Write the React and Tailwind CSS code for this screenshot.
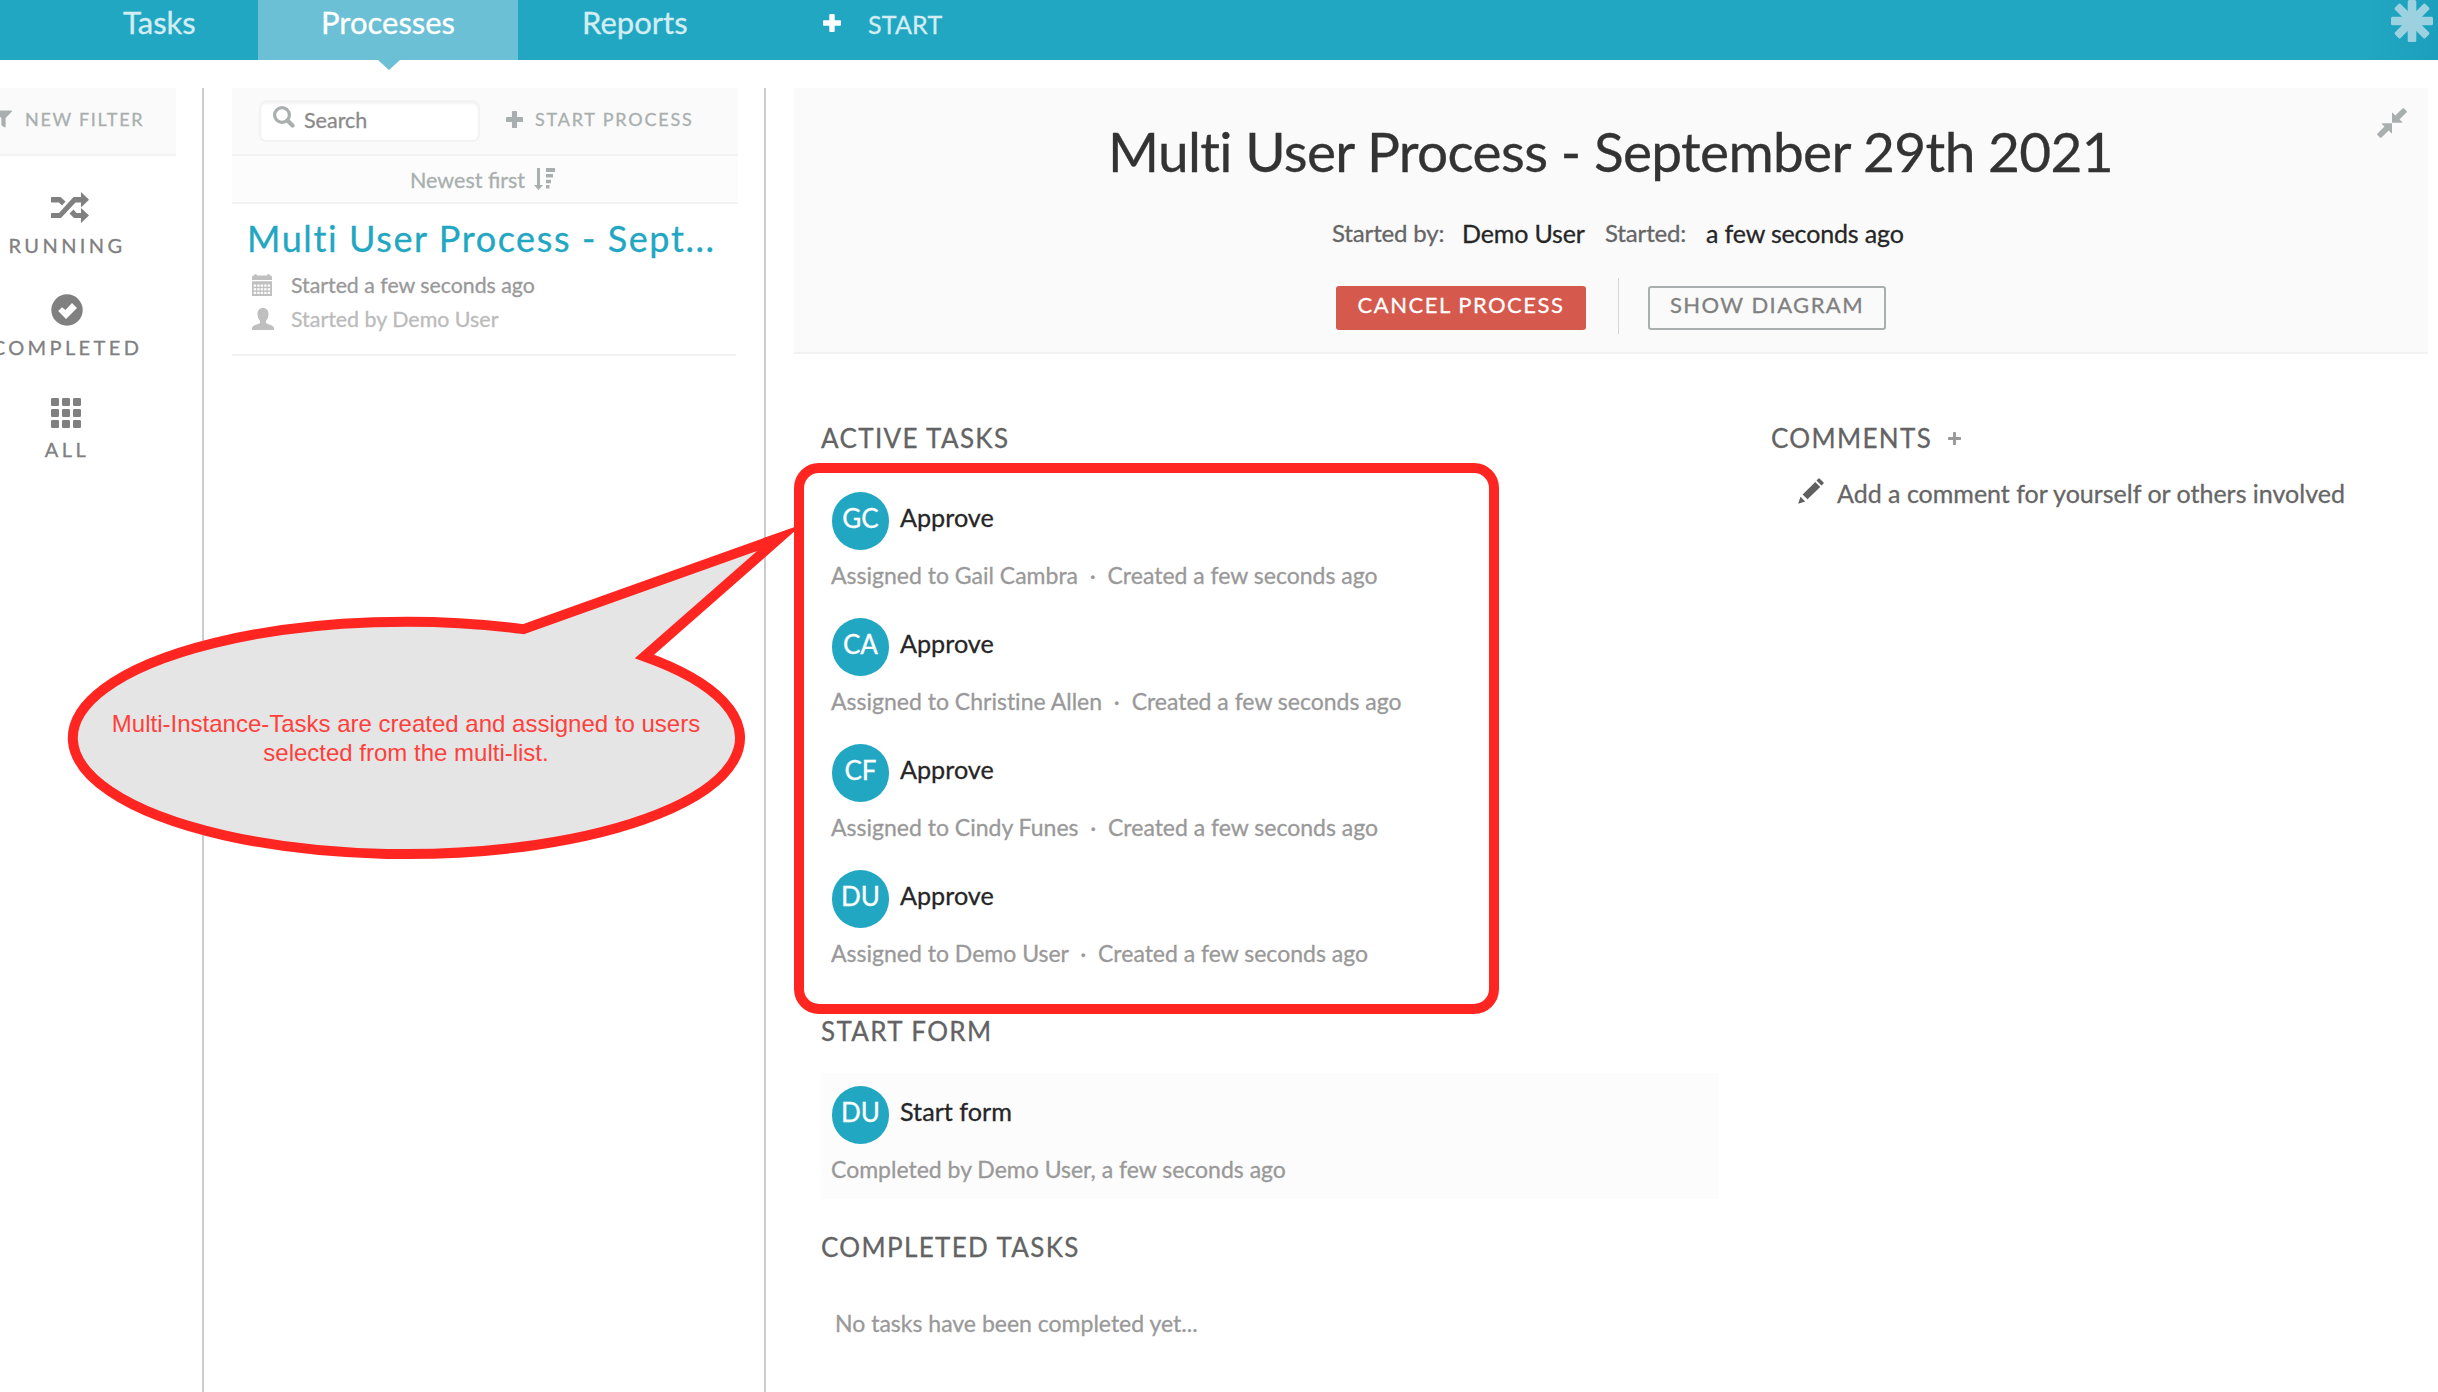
import React from "react";
import { FaFilter } from "react-icons/fa";

function Plus({ size, color, thickness = 6 }) {
  const a = 10 - thickness / 2;
  return (
    <svg viewBox="0 0 20 20" width={size} height={size} fill={color} className="block shrink-0">
      <rect x={a} y="0" width={thickness} height="20" rx="1" />
      <rect x="0" y={a} width="20" height={thickness} rx="1" />
    </svg>
  );
}
function Shuffle() {
  return (
    <svg viewBox="0 0 38 31" width="38" height="31" fill="#808080">
      <path d="M0 5.500Q0 5 .5 5H9.500L14.500 9.500 11 13.500 8 10.500H.5Q0 10.500 0 10zM0 21.500Q0 21 .5 21H8L22.500 5H30V0L38 7.700 30 15.500V10.500H24.500L10 26H.5Q0 26 0 25.500zM18.500 21.500L22.500 17.500 25.500 21H30V16L38 23.500 30 31V26H23z" />
    </svg>
  );
}
function CheckCircle() {
  return (
    <svg viewBox="0 0 32 32" width="32" height="32">
      <circle cx="16" cy="16" r="15.700" fill="#808080" />
      <path d="M7.200 17L11 13.200 14.500 16 21 9 26 14 15 25z" fill="#fff" />
    </svg>
  );
}
function Grid() {
  return (
    <svg viewBox="0 0 30 30" width="30" height="30" fill="#808080">
      {[0, 11, 22].map((x) => [0, 11, 22].map((y) => <rect key={x + "-" + y} x={x} y={y} width="8" height="8" rx="1.200" />))}
    </svg>
  );
}
function SortIcon() {
  return (
    <svg viewBox="0 0 21 22" width="21" height="22" fill="#a9afae">
      <path d="M3 0h3v17h3l-4.500 5L0 17h3zM12 0h9v4h-9zM12 6h7v3.500h-7zM12 11.700h5v3.500h-5zM12 17h3.500v3.500H12z" />
    </svg>
  );
}
function Calendar() {
  return (
    <svg viewBox="0 0 20 22" width="20" height="22">
      <path d="M0 3Q0 1.500 1.500 1.500H2Q2 0 3.500 0T5 1.500H15Q15 0 16.500 0T18 1.500H18.500Q20 1.500 20 3V6H0zM0 7.200H20V22H0z" fill="#c0c0c0" />
      {[1.7, 5.2, 8.7, 12.2, 15.7].map((x) =>
        [10.5, 14.2, 17.8].map((y) => <rect key={x + "-" + y} x={x} y={y} width="2.400" height="2.200" fill="#fff" />)
      )}
    </svg>
  );
}
function Person() {
  return (
    <svg viewBox="0 0 22 22" width="22" height="22" fill="#bfbfbf">
      <path d="M11 0c3.500 0 5.500 2.500 5.500 6 0 3-1.200 5.500-2.500 7v2c1.500 1.500 8 2 8 5v2H0v-2c0-3 6.500-3.500 8-5v-2c-1.300-1.500-2.500-4-2.500-7 0-3.500 2-6 5.500-6z" />
    </svg>
  );
}
function Magnifier() {
  return (
    <svg viewBox="0 0 22 22" width="22" height="22" fill="none" stroke="#a9afae">
      <circle cx="9" cy="9" r="7.400" strokeWidth="3.200" />
      <path d="M14.500 14.500l5 5" strokeWidth="4.200" strokeLinecap="round" />
    </svg>
  );
}
function Collapse() {
  return (
    <svg viewBox="0 0 30 30" width="30" height="30" fill="#a9afae">
      <path d="M15 5Q15 4.300 15.600 4.800L18.300 7.500 25.800.3Q26.300 0 26.800.3L29.700 3.200Q30 3.700 29.700 4.200L22.500 11.500 25.200 14Q25.600 14.700 25 14.700H15zM15 25Q15 25.700 14.400 25.200L11.700 22.500 4.200 29.700Q3.700 30 3.200 29.700L.3 26.800Q0 26.300.3 25.800L7.500 18.500 4.800 16Q4.400 15.300 5 15.300H15z" />
    </svg>
  );
}
function Star() {
  return (
    <svg viewBox="0 0 42 42" width="42" height="42" className="block" fill="#9cd2e0">
      <rect x="16.700" y="0" width="8.600" height="42" rx="1.500" />
      <rect x="0" y="16.700" width="42" height="8.600" rx="1.500" />
      <rect x="-.5" y="17" width="43" height="8" rx="1.500" transform="rotate(45 21 21)" />
      <rect x="-.5" y="17" width="43" height="8" rx="1.500" transform="rotate(-45 21 21)" />
    </svg>
  );
}
function Pencil() {
  return (
    <svg viewBox="0 0 26 26" width="26" height="26" fill="#606060">
      <path d="M20.500.4Q21 0 21.500.4L25.600 4.500Q26 5 25.600 5.500L23.500 7.500 18.500 2.500zM17.300 4L22.200 8.900 9.500 21.300 4.600 16.400zM2.500 18.800L7.200 23.500 1 25.600Q0 25.900.4 25z" />
    </svg>
  );
}

function Avatar({ children }) {
  return (
    <div className="flex h-[58px] w-[57px] items-center justify-center rounded-full bg-[#22a7c3] pb-[6px] text-[26px] leading-none text-white">
      {children}
    </div>
  );
}

function Task({ initials, title, children }) {
  return (
    <div className="pl-[11px]">
      <div className="flex gap-[11px]">
        <Avatar>{initials}</Avatar>
        <div className="pt-[9px] text-[25.2px] leading-[32px] text-[#262626]">{title}</div>
      </div>
      <div className="-ml-px mb-px mt-[9px] whitespace-pre text-[23px] leading-[32px] text-[#999]">{children}</div>
    </div>
  );
}

function Heading({ children }) {
  return <h2 className="text-[26px] leading-[30px] tracking-[1.35px] text-[#636363]">{children}</h2>;
}

function SideItem({ icon, label }) {
  return (
    <div className="flex flex-col items-center">
      <div className="flex h-[32px] items-center">{icon}</div>
      <div className="mt-[9px] text-[20px] leading-[26px] tracking-[3.4px] text-[#808080]">{label}</div>
    </div>
  );
}

const tasks = [
  ["GC", "Gail Cambra"],
  ["CA", "Christine Allen"],
  ["CF", "Cindy Funes"],
  ["DU", "Demo User"],
];

export default function App() {
  return (
    <div
      className="relative h-[1392px] w-[2438px] overflow-hidden bg-white [-webkit-text-stroke:0.3px] [font-variant-ligatures:none]"
      style={{ fontFamily: 'Lato, "Liberation Sans", sans-serif' }}
    >
      <header className="flex h-[60px] bg-linear-to-r from-[#22a7c3] from-97% to-[#1b9fbc] text-[31px] leading-[34px] text-[#d3edf3]">
        <div className="w-[258px] pl-[123px] pt-[5px]">Tasks</div>
        <div className="relative w-[260px] bg-[#6bc0d5] pt-[5px] text-center text-white">
          Processes
          <svg className="absolute left-[120px] top-[60px]" width="22" height="10" viewBox="0 0 22 10"><path d="M0 0H22L11 10z" fill="#6bc0d5" /></svg>
        </div>
        <div className="w-[305px] pl-[64px] pt-[5px]">Reports</div>
        <div className="flex grow pt-[7px]">
          <div className="mt-[7px]"><Plus size={18} color="#fff" thickness={6} /></div>
          <span className="ml-[27px] text-[25px] tracking-[0.2px]">START</span>
        </div>
        <div className="mr-[5px]"><Star /></div>
      </header>

      <div className="mt-[28px] flex h-[1304px]">
        <aside className="w-[202px] shrink-0">
          <div className="flex h-[68px] w-[176px] border-b-2 border-[#f2f2f2] bg-[#fafafa] pt-[19px]">
            <FaFilter className="ml-[-5px] mt-[3px] h-[18px] w-[17px] text-[#a9afae]" />
            <span className="ml-[13px] whitespace-nowrap text-[18px] leading-[24px] tracking-[1.7px] text-[#a9afae]">NEW FILTER</span>
          </div>
          <div className="ml-[-10px] mt-[35px] flex w-[154px] flex-col gap-[35px]">
            <SideItem icon={<div className="pl-[6px]"><Shuffle /></div>} label="RUNNING" />
            <SideItem icon={<div className="pt-px"><CheckCircle /></div>} label="COMPLETED" />
            <SideItem icon={<div className="pr-[2px] pt-[3px]"><Grid /></div>} label="ALL" />
          </div>
        </aside>

        <section className="w-[562px] shrink-0 border-l-2 border-[#ccc] pl-[28px]">
          <div className="w-[506px]">
            <div className="flex h-[68px] border-b-2 border-[#f2f2f2] bg-[#fafafa]">
              <div className="ml-[27px] mt-[12px] flex h-[42px] w-[221px] rounded-[7px] border-2 border-[#f3f3f3] bg-white pl-[12px] pt-[4px] shadow-[inset_0_2px_2px_#f3f3f3]">
                <Magnifier />
                <span className="ml-[9px] mt-px text-[21.5px] leading-[27px] text-[#8a8a8a]">Search</span>
              </div>
              <div className="ml-[26px] mt-[23px]"><Plus size={17} color="#a9afae" /></div>
              <span className="ml-[12px] mt-[19px] text-[18px] leading-[24px] tracking-[1.8px] text-[#a9afae]">START PROCESS</span>
            </div>
            <div className="flex h-[48px] gap-[9px] border-b-2 border-[#f2f2f2] bg-[#fcfcfc] pl-[178px] pt-[11px]">
              <span className="text-[21.5px] leading-[27px] text-[#a9afae] [font-variant-ligatures:normal]">Newest first</span>
              <div className="pt-px"><SortIcon /></div>
            </div>
            <div className="h-[152px] w-[504px] border-b-2 border-[#f2f2f2] pl-[15px] pt-[12px]">
              <div className="whitespace-nowrap text-[36px] leading-[44px] tracking-[1.6px] text-[#22a7c3]">Multi User Process - Sept...</div>
              <div className="ml-[5px] mt-[12px] flex h-[28px]"><div className="w-[39px] pt-[2px]"><Calendar /></div><span className="text-[21.3px] leading-[27px] text-[#999]">Started a few seconds ago</span></div>
              <div className="ml-[5px] mt-[6px] flex h-[28px]"><div className="w-[39px] pt-[2px]"><Person /></div><span className="text-[21.4px] leading-[27px] text-[#bbb]">Started by Demo User</span></div>
            </div>
          </div>
        </section>

        <main className="grow border-l-2 border-[#ccc] pl-[28px]">
          <div className="relative h-[266px] w-[1634px] border-b-2 border-[#f2f2f2] bg-[#fafafa]">
            <div className="absolute left-[1583px] top-[20px]"><Collapse /></div>
            <h1 className="whitespace-nowrap pl-[314px] pt-[29px] text-[55px] leading-[68px] tracking-[-0.66px] text-[#333]">Multi User Process - September 29th 2021</h1>
            <div className="flex whitespace-nowrap pl-[538px] pt-[31px] text-[24px] leading-[34px] tracking-[-0.15px] text-[#666]">
              <span className="w-[130px]">Started by:</span>
              <span className="w-[143px] text-[25px] text-[#262626]">Demo User</span>
              <span className="w-[101px]">Started:</span>
              <span className="text-[25px] text-[#262626]">a few seconds ago</span>
            </div>
            <div className="mt-[28px] flex pl-[542px] text-[22px] leading-[28px]">
              <div className="mt-[8px] h-[44px] w-[250px] rounded-[3px] bg-[#d5594c] pt-[5px] text-center tracking-[1.5px] text-white">CANCEL PROCESS</div>
              <div className="ml-[32px] h-[56px] w-px bg-[#d5d5d5]" />
              <div className="ml-[29px] mt-[8px] h-[44px] w-[238px] rounded-[3px] border-2 border-[#a9afae] pt-[3px] text-center tracking-[1.45px] text-[#808080]">SHOW DIAGRAM</div>
            </div>
          </div>

          <div className="flex pl-[27px] pt-[69px]">
            <div className="w-[898px]">
              <Heading>ACTIVE TASKS</Heading>
              <div className="mt-[39px] flex flex-col gap-[26px]">
                {tasks.map(([i, n]) => (
                  <Task key={i} initials={i} title="Approve">{`Assigned to ${n}  ·  Created a few seconds ago`}</Task>
                ))}
              </div>
              <div className="mt-[46px]"><Heading>START FORM</Heading></div>
              <div className="mt-[27px] h-[126px] bg-[#fcfcfc] pt-[13px]">
                <Task initials="DU" title="Start form">Completed by Demo User, a few seconds ago</Task>
              </div>
              <div className="mt-[33px]"><Heading>COMPLETED TASKS</Heading></div>
              <div className="ml-[14px] mt-[45px] text-[23px] leading-[32px] text-[#999]">No tasks have been completed yet...</div>
            </div>
            <div className="ml-[52px]">
              <div className="flex">
                <Heading>COMMENTS</Heading>
                <div className="ml-[16px] mt-[9px]"><Plus size={13} color="#999" thickness={4.5} /></div>
              </div>
              <div className="ml-[27px] mt-[25px] flex gap-[13px]">
                <Pencil />
                <span className="-mt-[2px] whitespace-nowrap text-[25px] leading-[34px] text-[#666]">Add a comment for yourself or others involved</span>
              </div>
            </div>
          </div>
        </main>
      </div>

      <div className="absolute left-[794px] top-[463px] h-[551px] w-[705px] rounded-[25px] border-[10px] border-[#ff2520]" />
      <svg className="absolute left-0 top-0" width="794" height="900" viewBox="0 0 794 900">
        <path d="M523.600 629.100L780 537.500L644.500 656.500A333.600 116.200 0 1 1 523.600 629.100z" fill="#e5e5e5" stroke="#ff2520" strokeWidth="10" strokeMiterlimit="10" />
      </svg>
      <div className="absolute left-[72px] top-[709px] w-[668px] text-center text-[24px] leading-[29px] text-[#ff3f3c] [-webkit-text-stroke:0px]" style={{ fontFamily: '"Liberation Sans", Arial, sans-serif' }}>
        Multi-Instance-Tasks are created and assigned to users<br />selected from the multi-list.
      </div>
    </div>
  );
}
